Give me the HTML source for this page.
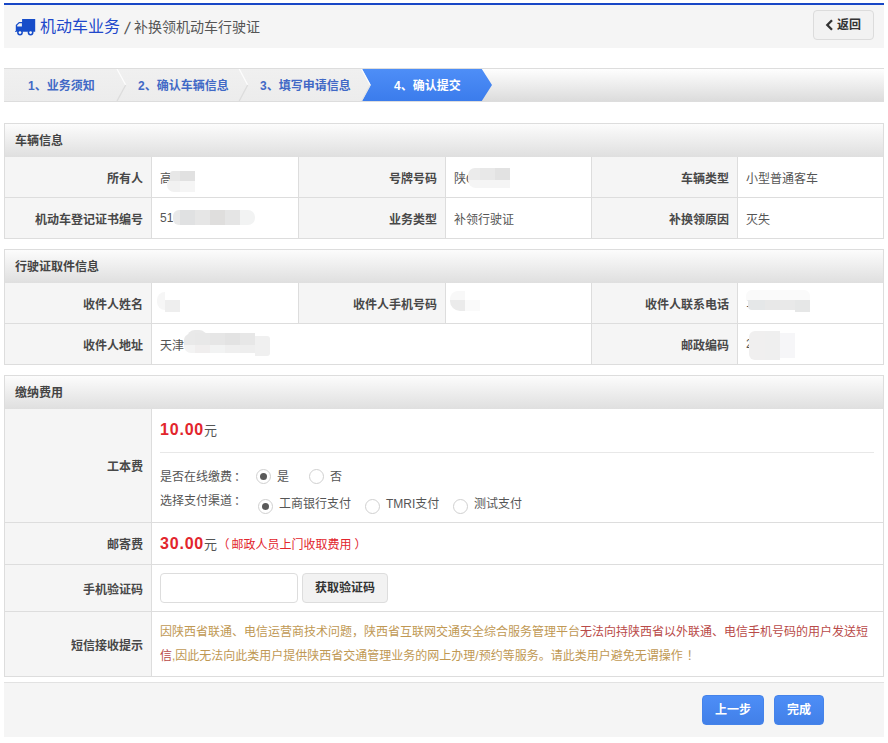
<!DOCTYPE html>
<html lang="zh-CN">
<head>
<meta charset="utf-8">
<title>补换领机动车行驶证</title>
<style>
*{box-sizing:border-box;margin:0;padding:0}
html,body{width:888px;height:743px;overflow:hidden;background:#fff}
body{font-family:"Liberation Sans","Noto Sans CJK SC",sans-serif;font-size:12px;color:#333;position:relative}
.abs{position:absolute}
.hdr{position:absolute;left:4px;top:3px;width:880px;height:45px;background:#f5f5f5;border-top:2px solid #1847c6}
.truck{position:absolute;left:14px;top:18px;width:22px;height:18px}
.t1{position:absolute;left:40px;top:15px;font-size:16px;color:#2148cb;line-height:24px;white-space:nowrap}
.t2{position:absolute;left:126px;top:15px;font-size:14px;color:#555;line-height:24px;white-space:nowrap}
.back{position:absolute;left:813px;top:10px;width:61px;height:30px;border:1px solid #dcdcdc;border-radius:4px;background:#f2f2f2;font-size:12px;font-weight:bold;color:#333;line-height:28px;padding-left:23px;white-space:nowrap}
.back svg{position:absolute;left:11px;top:8px}
.steps{position:absolute;left:4px;top:68px;width:880px;height:34px;border-top:1px solid #ddd;border-bottom:1px solid #ddd;background:linear-gradient(#fefefe,#dcdcdc)}
.steps svg{position:absolute;left:0;top:0}
.steps span{position:absolute;top:1px;line-height:32px;font-size:12px;font-weight:bold;color:#4169c6;white-space:nowrap}
.panel{position:absolute;left:4px;width:880px;border:1px solid #ddd;background:#fff}
.panel .ph{height:33px;line-height:35px;overflow:hidden;padding-left:10px;font-weight:bold;font-size:12px;color:#444;background:linear-gradient(#fcfcfc,#dfdfdf)}
table{border-collapse:separate;border-spacing:0;width:878px;table-layout:fixed}
td{border-left:1px solid #ddd;border-top:1px solid #ddd;font-size:12px;height:41px;padding:0 8px;vertical-align:middle;color:#555}
tr:first-child td{border-top:0;height:40px}
td:first-child{border-left:0}
td.l{background:#f5f5f5;text-align:right;font-weight:bold;color:#484848}
.red{color:#e2252c;font-weight:bold;font-size:16px;letter-spacing:.8px}
.yuan{font-size:13px}
.cn{position:relative;left:2px}
.foot{position:absolute;left:4px;top:682px;width:880px;height:55px;background:#f5f5f5;border-top:1px solid #e2e2e2}
.btn{position:absolute;top:695px;height:30px;border-radius:4px;background:linear-gradient(#4d8ef7,#4280e8);border:1px solid #4583ea;color:#fff;font-weight:bold;font-size:12px;line-height:28px;text-align:center}
.radio{position:absolute;width:15px;height:15px;border-radius:50%;border:1px solid #d0d0d0;background:#fff}
.radio.on:after{content:"";position:absolute;left:3px;top:3px;width:7px;height:7px;border-radius:50%;background:#5a5a5a}
.tx{position:absolute;line-height:16px;white-space:nowrap;color:#555}
.m{position:absolute}
</style>
</head>
<body>
<div class="hdr"></div>
<svg class="truck" viewBox="14 18 22 18"><path fill="#174dc9" fill-rule="evenodd" d="M22.100 19H35.200V31.700H15V30.900H15.800V25L19 22H22.100ZM17.200 26.500V25.300L19.400 23.300H21.900V26.500Z"/><circle cx="20" cy="32.500" r="2.900" fill="#174dc9"/><circle cx="30.600" cy="32.500" r="2.900" fill="#174dc9"/><circle cx="20" cy="32.600" r="1.350" fill="#fbfbfb"/><circle cx="30.600" cy="32.600" r="1.350" fill="#fbfbfb"/></svg>
<span class="t1">机动车业务</span><span class="t2" style="left:125px;font-size:17px;transform:skewX(-10deg);top:17px">/</span><span class="t2" style="left:134px">补换领机动车行驶证</span>
<div class="back"><svg width="9" height="12" viewBox="0 0 9 12"><path d="M7 1.200L2.300 6L7 10.800" fill="none" stroke="#333" stroke-width="2.300"/></svg>返回</div>

<div class="steps">
<svg width="880" height="32" viewBox="0 0 880 32">
<defs><linearGradient id="bg" x1="0" y1="0" x2="0" y2="1"><stop offset="0" stop-color="#4e8ef7"/><stop offset="1" stop-color="#3b7cec"/></linearGradient>
<linearGradient id="gg" x1="0" y1="0" x2="0" y2="1"><stop offset="0" stop-color="#f0f0f0"/><stop offset="1" stop-color="#ececec"/></linearGradient></defs>
<path d="M0 0H358L366.700 16L358 32H0Z" fill="url(#gg)"/>
<path d="M113 0L121.700 16" fill="none" stroke="#fff" stroke-width="1.300" opacity=".85"/>
<path d="M121.700 16L113 32" fill="none" stroke="#dcdcdc" stroke-width="1.300"/>
<path d="M235.200 0L243.700 16" fill="none" stroke="#fff" stroke-width="1.300" opacity=".85"/>
<path d="M243.700 16L235.200 32" fill="none" stroke="#dcdcdc" stroke-width="1.300"/>
<path d="M358 0L366.700 16L358 32L477.800 32L488 16L477.800 0Z" fill="url(#bg)"/>
<path d="M357.500 0L366.200 16" fill="none" stroke="#fff" stroke-width="1.200" opacity=".9"/>
<path d="M366.200 16L357.500 32" fill="none" stroke="#e4e4e4" stroke-width="1.200"/>
</svg>
<span style="left:24px">1、业务须知</span>
<span style="left:134px">2、确认车辆信息</span>
<span style="left:256px">3、填写申请信息</span>
<span style="left:390px;color:#fff">4、确认提交</span>
</div>

<div class="panel" style="top:123px">
<div class="ph">车辆信息</div>
<table>
<colgroup><col style="width:146px"><col style="width:147px"><col style="width:147px"><col style="width:146px"><col style="width:146px"><col style="width:146px"></colgroup>
<tr><td class="l">所有人</td><td>高</td><td class="l">号牌号码</td><td>陕C</td><td class="l">车辆类型</td><td>小型普通客车</td></tr>
<tr><td class="l">机动车登记证书编号</td><td>51</td><td class="l">业务类型</td><td>补领行驶证</td><td class="l">补换领原因</td><td>灭失</td></tr>
</table>
</div>

<div class="panel" style="top:249px">
<div class="ph">行驶证取件信息</div>
<table>
<colgroup><col style="width:146px"><col style="width:147px"><col style="width:147px"><col style="width:146px"><col style="width:146px"><col style="width:146px"></colgroup>
<tr><td class="l">收件人姓名</td><td></td><td class="l">收件人手机号码</td><td></td><td class="l">收件人联系电话</td><td>1</td></tr>
<tr><td class="l">收件人地址</td><td colspan="3">天津</td><td class="l">邮政编码</td><td>2</td></tr>
</table>
</div>

<div class="panel" style="top:375px">
<div class="ph">缴纳费用</div>
<table>
<colgroup><col style="width:146px"><col style="width:732px"></colgroup>
<tr><td class="l" style="height:113px">工本费</td><td></td></tr>
<tr><td class="l" style="height:42px">邮寄费</td><td></td></tr>
<tr><td class="l" style="height:47px">手机验证码</td><td></td></tr>
<tr><td class="l" style="height:65px">短信接收提示</td><td style="line-height:24px;color:#c09853;padding-top:0">因陕西省联通、电信运营商技术问题，陕西省互联网交通安全综合服务管理平台<span style="color:#b94a48">无法向持陕西省以外联通、电信手机号码的用户发送短信</span>,因此无法向此类用户提供陕西省交通管理业务的网上办理/预约等服务。请此类用户避免无谓操作<span style="position:relative;left:4px">！</span></td></tr>
</table>
</div>

<!-- fee row contents (page coordinates) -->
<div class="tx" style="left:160px;top:420px;line-height:20px"><span class="red">10.00</span><span class="yuan">元</span></div>
<div class="abs" style="left:160px;top:452px;width:714px;height:1px;background:#e8e8e8"></div>
<div class="tx" style="left:160px;top:469px">是否在线缴费<span class="cn">：</span></div>
<div class="radio on" style="left:256px;top:469px"></div><div class="tx" style="left:277px;top:469px">是</div>
<div class="radio" style="left:309px;top:469px"></div><div class="tx" style="left:330px;top:469px">否</div>
<div class="tx" style="left:160px;top:493px">选择支付渠道<span class="cn">：</span></div>
<div class="radio on" style="left:258px;top:499px"></div><div class="tx" style="left:279px;top:496px">工商银行支付</div>
<div class="radio" style="left:365px;top:499px"></div><div class="tx" style="left:386px;top:496px">TMRI支付</div>
<div class="radio" style="left:453px;top:499px"></div><div class="tx" style="left:474px;top:496px">测试支付</div>

<div class="tx" style="left:160px;top:534px;line-height:20px"><span class="red">30.00</span><span class="yuan">元</span> <span style="color:#e2252c;position:relative;left:-1px"><span style="position:relative;left:-2px">（</span>邮政人员上门收取费用<span style="position:relative;left:3px">）</span></span></div>

<div class="abs" style="left:160px;top:573px;width:138px;height:30px;border:1px solid #ddd;border-radius:4px;background:#fff"></div>
<div class="abs" style="left:302px;top:573px;width:86px;height:30px;border:1px solid #ddd;border-radius:4px;background:#f2f2f2;text-align:center;line-height:28px;font-weight:bold;color:#333">获取验证码</div>


<!-- pixelated privacy masks -->
<div class="m" style="left:170px;top:171px;width:10px;height:10px;background:#e7e7e7;border-radius:3px 0 0 0"></div>
<div class="m" style="left:180px;top:171px;width:15px;height:10px;background:#e1e1e1"></div>
<div class="m" style="left:167px;top:181px;width:13px;height:11px;background:#f1f1f1;border-radius:0 0 0 7px"></div>
<div class="m" style="left:180px;top:181px;width:15px;height:11px;background:#f5f5f5"></div>
<div class="m" style="left:173px;top:210px;width:7px;height:15px;background:#e9e9e9;border-radius:6px 0 0 6px"></div>
<div class="m" style="left:180px;top:210px;width:15px;height:15px;background:#e0e1e2"></div>
<div class="m" style="left:195px;top:210px;width:15px;height:15px;background:#e6e6e6"></div>
<div class="m" style="left:210px;top:210px;width:15px;height:15px;background:#dfdedd"></div>
<div class="m" style="left:225px;top:210px;width:15px;height:15px;background:#e5e5e5"></div>
<div class="m" style="left:240px;top:210px;width:15px;height:15px;background:#f2f3f3;border-radius:0 7px 7px 0"></div>
<div class="m" style="left:468px;top:168px;width:12px;height:12px;background:#ebebeb;border-radius:7px 0 0 0"></div>
<div class="m" style="left:480px;top:168px;width:15px;height:12px;background:#e8e8e8"></div>
<div class="m" style="left:495px;top:168px;width:15px;height:12px;background:#e2e2e2"></div>
<div class="m" style="left:468px;top:180px;width:42px;height:8px;background:#f5f5f5;border-radius:0 0 0 8px"></div>
<div class="m" style="left:157px;top:292px;width:8px;height:18px;background:#f6f6f6;border-radius:8px 0 0 8px"></div>
<div class="m" style="left:165px;top:300px;width:15px;height:12px;background:#eeeeee"></div>
<div class="m" style="left:187px;top:330px;width:20px;height:8px;background:#e9e9e9;border-radius:10px 10px 0 0"></div>
<div class="m" style="left:184px;top:334px;width:11px;height:11px;background:#e9e9e9;border-radius:6px 0 0 0"></div>
<div class="m" style="left:195px;top:333px;width:15px;height:12px;background:#e8e8e8"></div>
<div class="m" style="left:210px;top:333px;width:15px;height:12px;background:#e6e6e6"></div>
<div class="m" style="left:225px;top:333px;width:15px;height:12px;background:#e3e3e3"></div>
<div class="m" style="left:240px;top:333px;width:15px;height:12px;background:#e7e7e7"></div>
<div class="m" style="left:184px;top:345px;width:11px;height:8px;background:#f3f3f3;border-radius:0 0 0 7px"></div>
<div class="m" style="left:195px;top:345px;width:15px;height:8px;background:#f0eeee"></div>
<div class="m" style="left:210px;top:345px;width:15px;height:8px;background:#f2f3f3"></div>
<div class="m" style="left:225px;top:345px;width:15px;height:8px;background:#efefef"></div>
<div class="m" style="left:240px;top:345px;width:15px;height:8px;background:#eeeeee"></div>
<div class="m" style="left:255px;top:336px;width:15px;height:20px;background:#f0f0f0;border-radius:0 3px 3px 0"></div>
<div class="m" style="left:450px;top:291px;width:15px;height:9px;background:#f8f8f8;border-radius:8px 0 0 0"></div>
<div class="m" style="left:450px;top:300px;width:15px;height:11px;background:#ebebeb;border-radius:0 0 0 10px"></div>
<div class="m" style="left:465px;top:300px;width:15px;height:11px;background:#fafafa"></div>
<div class="m" style="left:746px;top:290px;width:64px;height:10px;background:#fafafa;border-radius:6px 6px 0 0"></div>
<div class="m" style="left:748px;top:300px;width:17px;height:10px;background:#e5e7e8;border-radius:0 0 0 4px"></div>
<div class="m" style="left:765px;top:300px;width:15px;height:10px;background:#e8e8e8"></div>
<div class="m" style="left:780px;top:300px;width:15px;height:10px;background:#e9e9e9"></div>
<div class="m" style="left:795px;top:300px;width:15px;height:12px;background:#e6e7e7"></div>
<div class="m" style="left:749px;top:331px;width:16px;height:29px;background:#f0efef;border-radius:6px 0 0 6px"></div>
<div class="m" style="left:765px;top:331px;width:15px;height:29px;background:#efefef"></div>
<div class="m" style="left:780px;top:333px;width:15px;height:25px;background:#f6f6f8"></div>

<div class="foot"></div>
<div class="btn" style="left:702px;width:62px">上一步</div>
<div class="btn" style="left:774px;width:50px">完成</div>
</body>
</html>
